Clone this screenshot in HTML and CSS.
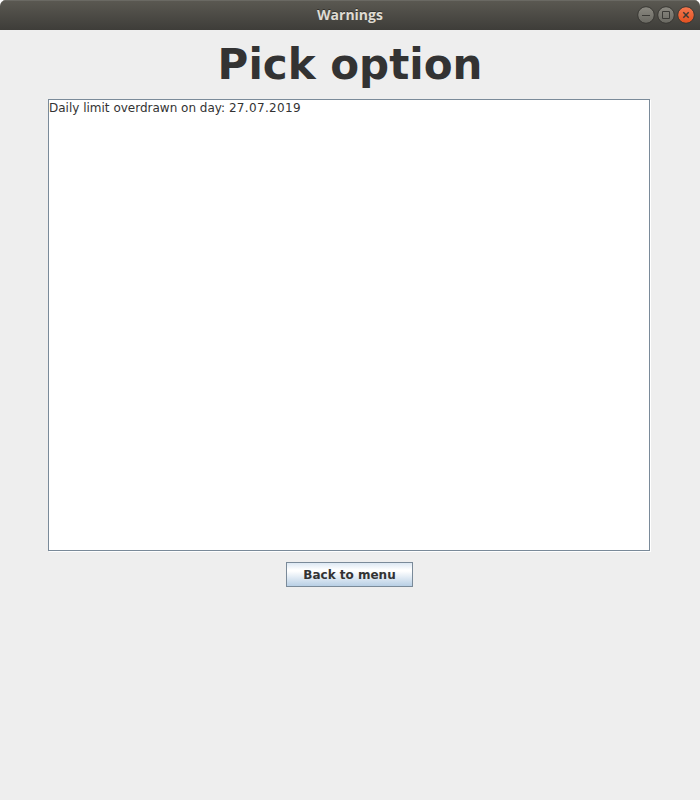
FILE: index.html
```html
<!DOCTYPE html>
<html lang="en">
<head>
<meta charset="utf-8">
<title>Warnings</title>
<link rel="stylesheet" href="styles.css">
</head>
<body>
<div class="window">
  <header class="titlebar">
    <span class="title">Warnings</span>
    <div class="controls">
      <svg class="control" viewBox="0 0 18 18"><defs><linearGradient id="grey" x2="0" y2="1"><stop stop-color="#8b8981"/><stop offset="1" stop-color="#696861"/></linearGradient><linearGradient id="orange" x2="0" y2="1"><stop stop-color="#f47850"/><stop offset="1" stop-color="#e3501f"/></linearGradient></defs><circle class="disc" cx="9" cy="9" r="8.3"/><path class="glyph" d="M5 9.5h8"/></svg>
      <svg class="control" viewBox="0 0 18 18"><circle class="disc" cx="9" cy="9" r="8.3"/><path class="glyph" d="M5.5 5.5h7v7h-7z"/></svg>
      <svg class="control close" viewBox="0 0 18 18"><circle class="disc" cx="9" cy="9" r="8.3"/><path class="glyph" d="M6.3 6.3l5.4 5.4M11.7 6.3l-5.4 5.4"/></svg>
    </div>
  </header>
  <main class="content">
    <h1 class="heading">Pick option</h1>
    <div class="list"><div class="item">Daily limit overdrawn on day: <span class="date">27.07.2019</span></div></div>
    <button class="back">Back to menu</button>
  </main>
</div>
</body>
</html>
```
FILE: styles.css
```css
* { box-sizing: border-box; }
body { margin: 0; background: #fff; font-family: "DejaVu Sans", sans-serif; color: #333; }
.window { height: 800px; background: #eee; border-radius: 6px 6px 0 0; overflow: hidden; }
.titlebar { height: 30px; display: grid; grid-template-columns: 1fr auto 1fr; align-items: center; padding: 0 5px; background: linear-gradient(#5b5952, #3e3d39); box-shadow: inset 0 1px #6a6963; }
.title { grid-column: 2; padding-bottom: 2px; font: bold 14px "Open Sans", sans-serif; color: #dfdbd2; text-shadow: 0 -1px #32312d; }
.controls { display: flex; justify-content: flex-end; gap: 2px; }
.control { width: 18px; height: 18px; fill: none; }
.disc { fill: url(#grey); stroke: #383733; }
.glyph { stroke: #3b3a36; }
.close .disc { fill: url(#orange); }
.close .glyph { stroke-width: 1.5; }
.content { display: flex; flex-direction: column; align-items: center; }
.heading { margin: 10px 0 9px; font-size: 42px; line-height: 50px; font-weight: bold; white-space: nowrap; }
.list { width: 602px; height: 452px; border: 1px solid #7a8a99; background: #fff; margin-right: 2px; box-shadow: 1px 1px #fff; }
.item { padding-top: 1px; font-size: 12px; line-height: 15px; }
.date { letter-spacing: 0.33px; }
.back { margin: 11px 1px 0 0; width: 127px; height: 25px; padding: 0; border: 1px solid #7a8a99; background: linear-gradient(#dde8f3, #fff 30%, #fff 35%, #b8cfe5); color: #333; font: bold 12px "DejaVu Sans", sans-serif; }
```
